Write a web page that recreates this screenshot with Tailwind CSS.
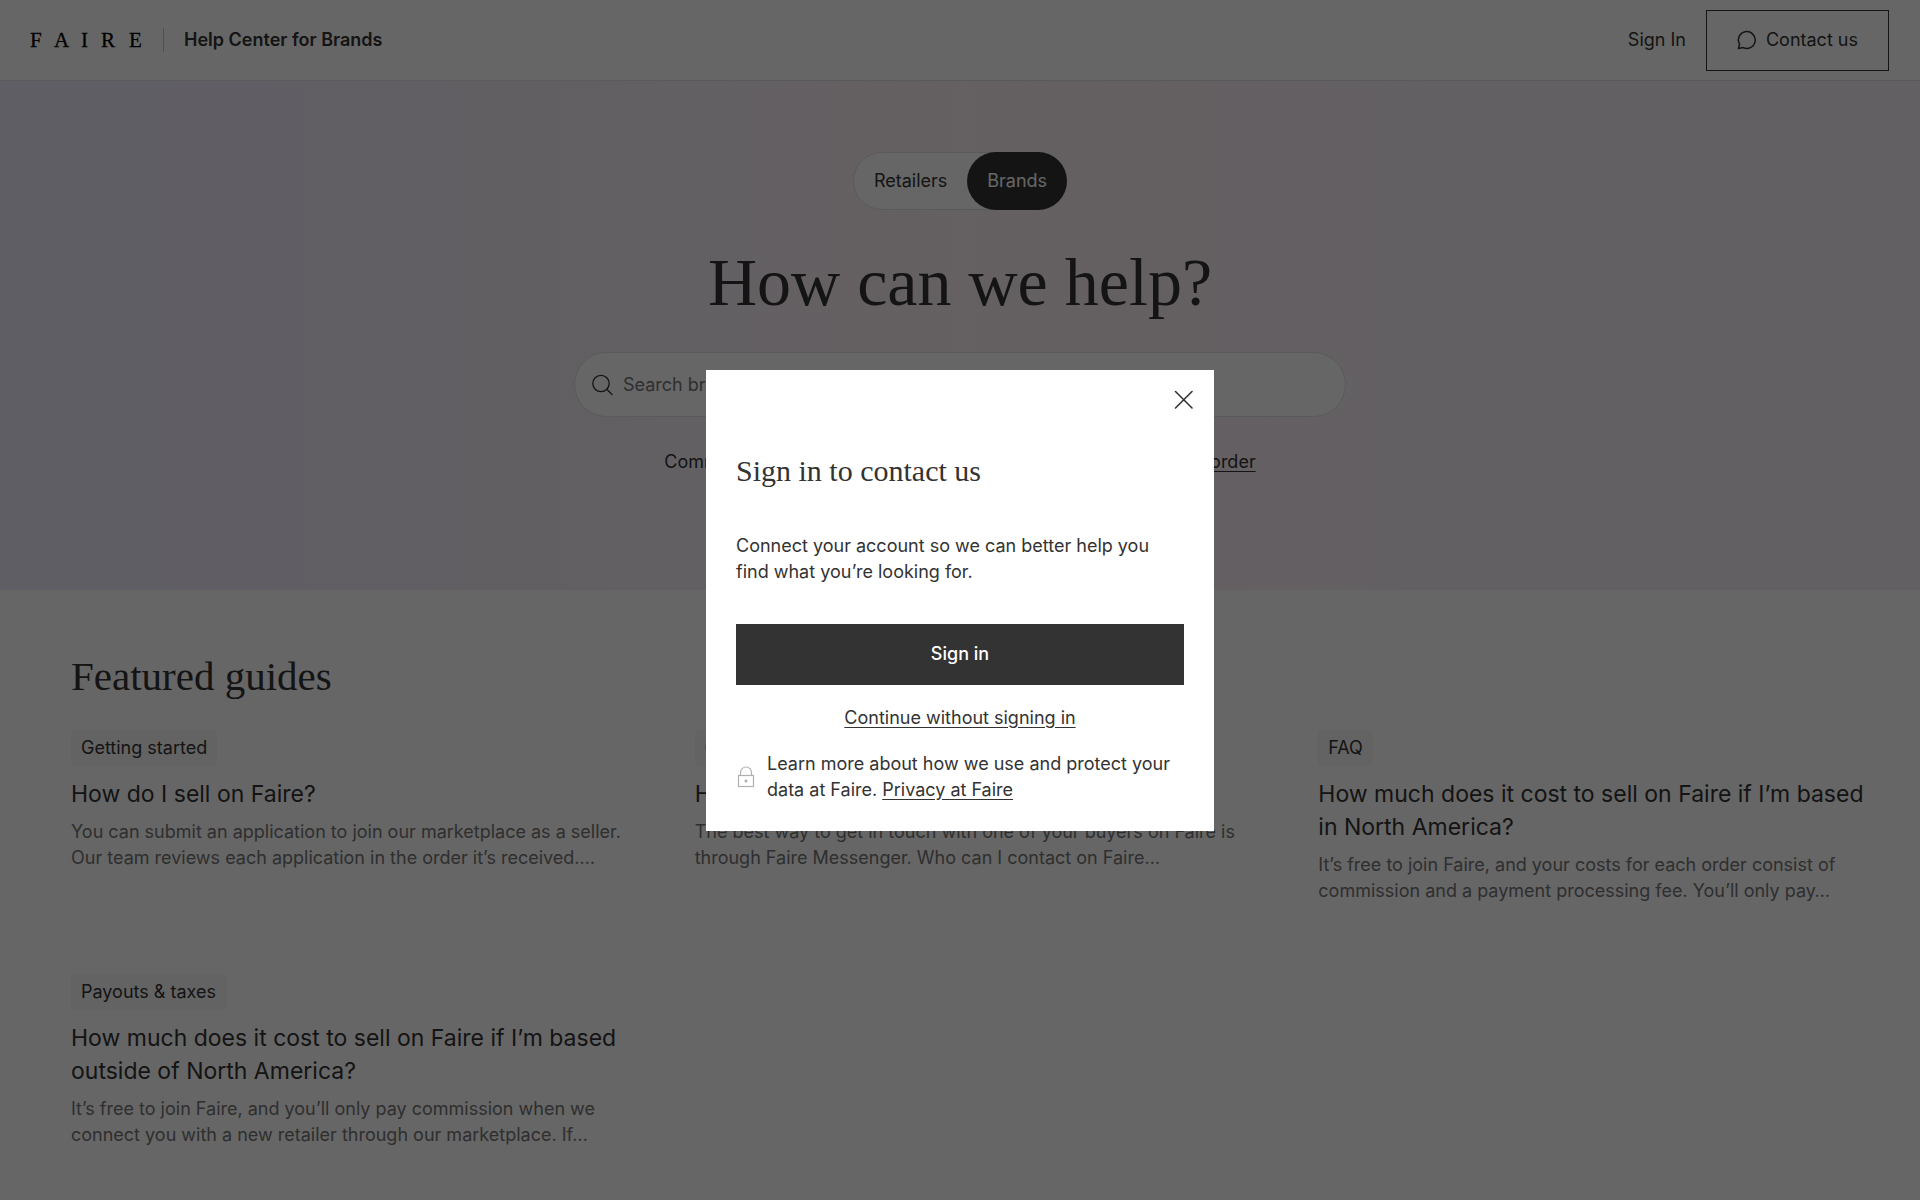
<!DOCTYPE html>
<html lang="en">

<head>
    <meta charset="UTF-8" />
    <meta name="viewport" content="width=device-width, initial-scale=1.0" />
    <title>Help Center for Brands</title>
    <script src="https://cdn.jsdelivr.net/npm/@tailwindcss/browser@4"></script>
</head>

<body class="bg-white text-[#333333] text-[18px] leading-[26px] font-['Inter',sans-serif] h-screen overflow-hidden">

    <header class="h-[81px] border-b border-[#dfe0e1] pl-[30px] pr-[31px] flex items-center justify-between">
        <div class="flex items-center">
            <a href="#" aria-label="Faire">
                <svg width="114" height="24" viewBox="0 0 114 24" class="block text-black" fill="currentColor" stroke="currentColor" stroke-width="0.3">
                    <text x="0 24 51 71 99" y="19" font-family="Liberation Serif, serif" font-size="21">FAIRE</text>
                </svg>
            </a>
            <span class="w-px h-6 bg-[#c8c8c8] ml-[19px] mr-5"></span>
            <a href="#" class="font-semibold">Help Center for Brands</a>
        </div>
        <nav class="flex items-center gap-5">
            <a href="#">Sign In</a>
            <button type="button" class="h-[61px] px-[30px] border border-[#333333] flex items-center gap-[9px]">
                <svg width="20" height="20" viewBox="0 0 20 20" fill="none" stroke="currentColor" stroke-width="1.5" stroke-linejoin="round">
                    <path d="M1.4 18.4 L2.6 14.3 A8.4 8.4 0 1 1 6.2 17.6 Z" />
                </svg>
                Contact us
            </button>
        </nav>
    </header>

    <section class="h-[509px] pt-[71px] flex flex-col items-center bg-linear-to-r from-[#eceafa] via-[#fcf1f6] to-[#f4f0f8]">
        <div class="flex h-[58px] rounded-full bg-white border border-[#dfe0e1]">
            <a href="#" class="flex items-center px-5">Retailers</a>
            <a href="#" class="flex items-center px-5 -my-px -mr-px rounded-full bg-[#333333] text-white">Brands</a>
        </div>
        <h1 class="mt-8 font-['Liberation_Serif',serif] text-[68px] leading-[80px]">How can we help?</h1>
        <form class="mt-[30px] w-full max-w-[772px] h-[65px] rounded-full bg-white border border-[#dfe0e1] flex items-center pl-4 pr-6 gap-2">
            <svg width="24" height="24" viewBox="0 0 24 24" fill="none" stroke="currentColor" stroke-width="1.3" stroke-linecap="round">
                <circle cx="10" cy="10.5" r="8.2" />
                <path d="M16 16.5 L21 21.5" />
            </svg>
            <input type="search" aria-label="Search" placeholder="Search brand help articles" class="grow bg-transparent outline-none placeholder:text-[#757575]" />
        </form>
        <p class="mt-8">Commonly searched: <a href="#" class="underline underline-offset-3">commission</a>, <a href="#" class="underline underline-offset-3">payouts</a>, <a href="#" class="underline underline-offset-3">shipping</a>, <a href="#" class="underline underline-offset-3">cancel an order</a></p>
    </section>

    <main class="pl-[71px] pr-[38px] pt-[60px]">
        <h2 class="font-['Liberation_Serif',serif] text-[41px] leading-[52px]">Featured guides</h2>
        <div class="mt-7 grid grid-cols-3 gap-x-[60px] gap-y-[70px]">
            <article>
                <span class="inline-block bg-[#f7f7f7] rounded px-[10px] py-[5px]">Getting started</span>
                <h3 class="mt-3 text-[23px] leading-[33px]"><a href="#">How do I sell on Faire?</a></h3>
                <p class="mt-2 text-[#757575]">You can submit an application to join our marketplace as a seller.<br>Our team reviews each application in the order it’s received.…</p>
            </article>
            <article>
                <span class="inline-block bg-[#f7f7f7] rounded px-[10px] py-[5px]">Orders</span>
                <h3 class="mt-3 text-[23px] leading-[33px]"><a href="#">How do I contact a buyer?</a></h3>
                <p class="mt-2 text-[#757575]">The best way to get in touch with one of your buyers on Faire is<br>through Faire Messenger. Who can I contact on Faire…</p>
            </article>
            <article>
                <span class="inline-block bg-[#f7f7f7] rounded px-[10px] py-[5px]">FAQ</span>
                <h3 class="mt-3 text-[23px] leading-[33px]"><a href="#">How much does it cost to sell on Faire if I’m based<br>in North America?</a></h3>
                <p class="mt-2 text-[#757575]">It’s free to join Faire, and your costs for each order consist of<br>commission and a payment processing fee. You’ll only pay…</p>
            </article>
            <article>
                <span class="inline-block bg-[#f7f7f7] rounded px-[10px] py-[5px]">Payouts &amp; taxes</span>
                <h3 class="mt-3 text-[23px] leading-[33px]"><a href="#">How much does it cost to sell on Faire if I’m based<br>outside of North America?</a></h3>
                <p class="mt-2 text-[#757575]">It’s free to join Faire, and you’ll only pay commission when we<br>connect you with a new retailer through our marketplace. If…</p>
            </article>
        </div>
    </main>

    <!-- sign in modal -->
    <div class="fixed inset-0 bg-black/60 flex items-center justify-center">
        <div role="dialog" aria-modal="true" aria-labelledby="modal-title" class="relative w-[508px] bg-white px-[30px] pt-[82px] pb-7">
            <button type="button" aria-label="Close" class="absolute top-[18px] right-[18px]">
                <svg width="24" height="24" viewBox="0 0 24 24" fill="none" stroke="currentColor" stroke-width="1.6" stroke-linecap="round">
                    <path d="M3.5 3.5 L20 20 M20 3.5 L3.5 20" />
                </svg>
            </button>
            <h2 id="modal-title" class="font-['Liberation_Serif',serif] text-[30px] leading-[38px]">Sign in to contact us</h2>
            <p class="mt-[43px]">Connect your account so we can better help you<br>find what you’re looking for.</p>
            <button type="button" class="mt-[39px] w-full h-[61px] bg-[#333333] text-white font-medium">Sign in</button>
            <div class="mt-5 text-center">
                <a href="#" class="underline underline-offset-3">Continue without signing in</a>
            </div>
            <div class="mt-5 flex items-center gap-[11px]">
                <svg width="20" height="24" viewBox="0 0 20 24" class="shrink-0 text-[#b0b0b0]" fill="none" stroke="currentColor" stroke-width="1.2">
                    <rect x="2.5" y="10.5" width="15" height="11" />
                    <path d="M4.5 10.5 V7.5 A5.5 5.5 0 0 1 15.5 7.5 V10.5" />
                    <circle cx="10" cy="16" r="1.5" fill="currentColor" stroke="none" />
                </svg>
                <p>Learn more about how we use and protect your<br>data at Faire. <a href="#" class="underline underline-offset-3">Privacy at Faire</a></p>
            </div>
        </div>
    </div>

</body>

</html>
